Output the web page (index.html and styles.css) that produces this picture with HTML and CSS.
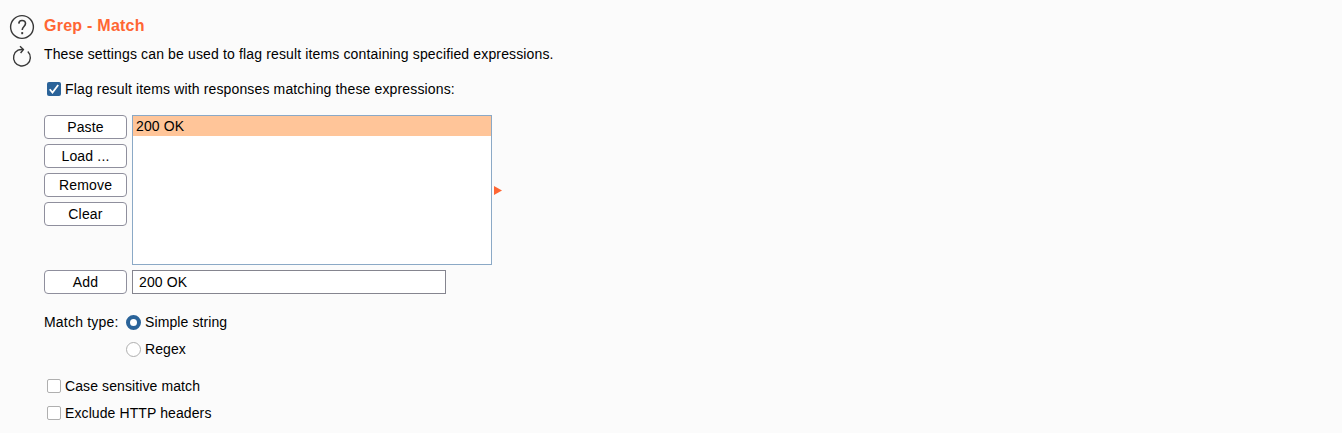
FILE: index.html
```html
<!DOCTYPE html>
<html lang="en">
<head>
<meta charset="utf-8">
<title>Grep - Match</title>
<link rel="stylesheet" href="styles.css">
</head>
<body>
<section class="panel">
  <div class="tools">
    <svg class="help" width="26" height="26" viewBox="0 0 26 26" fill="none" stroke="#383838">
      <circle cx="13" cy="13" r="11.4" stroke-width="1.4"/>
      <path d="M9.8 9.6C9.9 7.4 11.1 6.5 13 6.5C15.3 6.5 16.5 7.8 16.5 9.6C16.5 12.5 13.3 12.6 13.2 16.1" stroke-width="1.6"/>
      <path d="M13.2 18.1V20.2" stroke-width="1.9"/>
    </svg>
    <svg class="reset" width="26" height="26" viewBox="0 0 26 26" fill="none" stroke="#383838">
      <path d="M18.8 7.6A8.4 8.4 0 1 1 9 6.2Q11 5.3 14.2 5.5" stroke-width="1.4"/>
      <path d="M11 2.2L14.4 5.5L11.6 9" stroke-width="1.4"/>
    </svg>
  </div>
  <div class="content">
    <h1 class="title">Grep - Match</h1>
    <p class="desc">These settings can be used to flag result items containing specified expressions.</p>
    <div class="option flag">
      <span class="check checked"><svg width="14" height="14" viewBox="0 0 14 14" fill="none" stroke="#fff" stroke-width="1.8"><path d="M2.7 7.2L5.5 10.6L11.2 3"/></svg></span>
      <span>Flag result items with responses matching these expressions:</span>
    </div>
    <div class="editor">
      <div class="buttons">
        <button class="button">Paste</button>
        <button class="button">Load ...</button>
        <button class="button">Remove</button>
        <button class="button">Clear</button>
      </div>
      <div class="list"><div class="item">200 OK</div></div>
      <svg class="arrow" width="8" height="10" viewBox="0 0 8 10"><path d="M0 0L8 4.5L0 9Z" fill="#ff6633"/></svg>
    </div>
    <div class="add-row">
      <button class="button">Add</button>
      <div class="field">200 OK</div>
    </div>
    <div class="match">
      <span class="match-label">Match type:</span>
      <div class="choices">
        <div class="option"><span class="radio selected"></span><span>Simple string</span></div>
        <div class="option"><span class="radio"></span><span>Regex</span></div>
      </div>
    </div>
    <div class="extras">
      <div class="option"><span class="check"></span><span>Case sensitive match</span></div>
      <div class="option"><span class="check"></span><span>Exclude HTTP headers</span></div>
    </div>
  </div>
</section>
</body>
</html>
```
FILE: styles.css
```css
* { box-sizing: border-box; }
body {
  margin: 0;
  height: 433px;
  overflow: hidden;
  background: #fbfbfb;
  color: #000;
  font: 14px/20px "Liberation Sans", Arial, sans-serif;
  letter-spacing: 0.1px;
}
.panel { display: flex; padding-left: 9px; }
.tools { display: flex; flex-direction: column; width: 35px; padding-top: 14px; gap: 4px; }
.tools svg { display: block; }
.content { display: flex; flex-direction: column; padding-top: 16px; white-space: nowrap; }
.title { margin: 0; color: #ff6633; font-size: 16px; line-height: 20px; letter-spacing: 0.25px; }
.desc { margin: 8px 0 0; letter-spacing: 0.143px; }
.option { display: flex; align-items: center; height: 20px; }
.flag { margin-top: 15px; padding-left: 3px; letter-spacing: 0.143px; }
.check {
  width: 14px;
  height: 14px;
  margin-right: 4px;
  border: 1px solid #afafaf;
  border-radius: 2px;
  background: #fff;
}
.check.checked { border: 0; background: #2a6399; }
.check svg { display: block; }
.editor { display: flex; margin-top: 16px; }
.buttons { display: flex; flex-direction: column; gap: 5px; width: 88px; }
.button {
  width: 83px;
  height: 24px;
  padding: 0;
  border: 1px solid #8f8f9d;
  border-radius: 4px;
  background: #fff;
  color: #000;
  font: inherit;
  letter-spacing: 0.18px;
}
.list { width: 360px; height: 150px; border: 1px solid #8ba9c6; background: #fff; }
.item { height: 20px; padding-left: 3px; background: #ffc599; }
.arrow { margin: 71px 0 0 2px; }
.add-row { display: flex; gap: 5px; margin-top: 5px; }
.field { width: 314px; height: 24px; padding-left: 6px; border: 1px solid #85858f; background: #fff; line-height: 22px; }
.match { display: flex; margin-top: 18px; }
.match-label { width: 82px; letter-spacing: 0.2px; }
.choices, .extras { display: flex; flex-direction: column; gap: 7px; }
.radio {
  width: 15px;
  height: 15px;
  margin-right: 4px;
  border: 1px solid #afafaf;
  border-radius: 50%;
  background: #fff;
}
.radio.selected { border: 4px solid #2a6399; }
.extras { margin-top: 17px; padding-left: 3px; }
```
